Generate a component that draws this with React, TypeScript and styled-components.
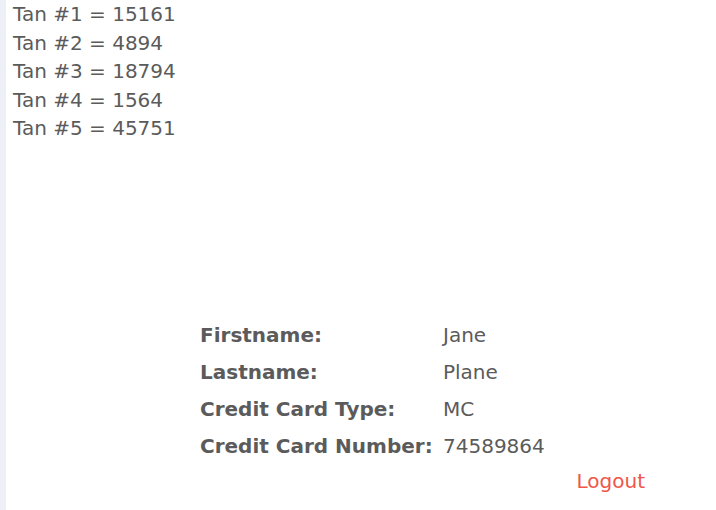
import React from 'react';
import styled, { createGlobalStyle } from 'styled-components';

const GlobalStyle = createGlobalStyle`
  html, body {
    margin: 0;
    padding: 0;
    background: #ffffff;
  }
  body {
    font-family: "DejaVu Sans", "Liberation Sans", sans-serif;
    color: #5b5b5b;
  }
`;

const tans = [15161, 4894, 18794, 1564, 45751];

const profile = [
  { label: 'Firstname:', value: 'Jane' },
  { label: 'Lastname:', value: 'Plane' },
  { label: 'Credit Card Type:', value: 'MC' },
  { label: 'Credit Card Number:', value: '74589864' },
];

const App = () => (
  <>
    <GlobalStyle />
    <Layout>
      <SideStrip />
      <Main>
        <TanList>
          {tans.map((tan, i) => (
            <TanItem key={i}>
              Tan #{i + 1} = {tan}
            </TanItem>
          ))}
        </TanList>

        <Profile>
          <ProfileTable>
            {profile.map(row => (
              <React.Fragment key={row.label}>
                <Label>{row.label}</Label>
                <Value>{row.value}</Value>
              </React.Fragment>
            ))}
          </ProfileTable>
          <LogoutRow>
            <LogoutLink href="#">Logout</LogoutLink>
          </LogoutRow>
        </Profile>
      </Main>
    </Layout>
  </>
);

export default App;

const Layout = styled.div`
  display: flex;
  min-height: 510px;
`;
const SideStrip = styled.div`
  width: 6px;
  flex-shrink: 0;
  background: #eef0f7;
`;
const Main = styled.main`
  flex: 1;
  padding: 0 0 0 7px;
  display: flex;
  flex-direction: column;
`;
const TanList = styled.ul`
  list-style: none;
  margin: 0;
  padding: 0;
  display: flex;
  flex-direction: column;
`;
const TanItem = styled.li`
  font-size: 20px;
  line-height: 28.5px;
`;
const Profile = styled.section`
  margin: 174px 0 0 187px;
  width: 445px;
  display: flex;
  flex-direction: column;
`;
const ProfileTable = styled.div`
  display: grid;
  grid-template-columns: 243px auto;
  font-size: 20px;
`;
const Label = styled.span`
  font-weight: 700;
  line-height: 37px;
`;
const Value = styled.span`
  line-height: 37px;
`;
const LogoutRow = styled.div`
  display: flex;
  justify-content: flex-end;
`;
const LogoutLink = styled.a`
  color: #f0554a;
  font-size: 20px;
  line-height: 32px;
  text-decoration: none;
`;
